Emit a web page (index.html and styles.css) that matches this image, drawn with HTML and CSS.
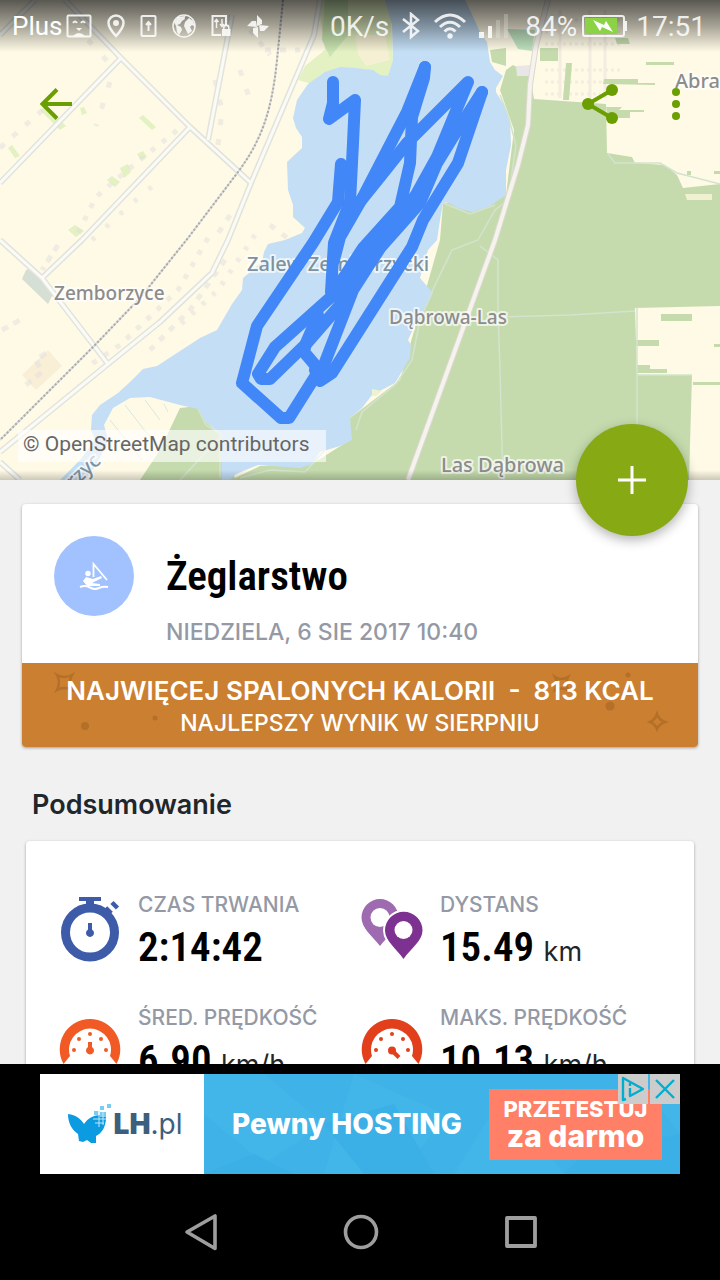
FILE: index.html
```html
<!DOCTYPE html>
<html lang="pl">
<head>
  <meta charset="UTF-8">
  <meta name="viewport" content="width=device-width, initial-scale=1">
  <title>Żeglarstwo</title>
  <link rel="stylesheet" href="styles.css">
</head>
<body>

<div class="app">
  <main class="content">
    <header class="hero">
      <svg class="map" viewBox="0 0 720 480" preserveAspectRatio="xMidYMid slice" role="img" aria-label="Zalew Zemborzycki">
        <rect width="720" height="480" fill="#fffae6"/>

        <!-- parks and meadows -->
        <path d="M318 0H390L393 60L388 78L380 77L370 70L340 68L312 84L298 80L305 66L325 50L322 30Z" fill="#e3f1c3"/>
        <path d="M325 0H348V35L330 57L322 40Z" fill="#c9e4b0"/>
        <path d="M355 35H385L390 60L366 66L358 55Z" fill="#f5f0d3"/>
        <path d="M40 110L46 106L66 126L60 130ZM139 118L143 115L156 127L152 130ZM8 148L12 145L20 156L15 158ZM80 108L84 107L87 113L82 115ZM107 180L112 176L120 182L115 187ZM120 168L128 164L131 172L124 178ZM68 230L75 225L84 231L76 237ZM137 154L143 151L147 157L141 160Z" fill="#e3f1c3"/>
        <path d="M26 270L31 268L54 292L48 304L22 279Z" fill="#d5dfd3"/>
        <path d="M22 375L48 350L62 366L36 390Z" fill="#f8efd6"/>

        <!-- built-up plots -->
        <g fill="none" stroke="#e3dfe0" stroke-width="5" opacity=".5">
          <path d="M0 148L22 128L45 108" stroke-dasharray="6 11"/>
          <path d="M78 233L96 197L118 178L146 155L180 128" stroke-dasharray="5 9"/>
          <path d="M92 240L130 205L160 180" stroke-dasharray="4 15"/>
          <path d="M88 40L108 62M110 82L96 126" stroke-dasharray="6 16"/>
          <path d="M215 80L222 110L218 145M240 70L250 100" stroke-dasharray="6 14"/>
          <path d="M208 238L178 290L120 345L90 365" stroke-dasharray="5 9"/>
          <path d="M225 260L190 310L150 350" stroke-dasharray="6 8"/>
          <path d="M255 235L218 290L180 325" stroke-dasharray="4 10"/>
          <path d="M58 245L42 270M26 385L42 372L36 360L50 350M2 330L20 320" stroke-dasharray="7 6"/>
          <path d="M265 50H300M250 30L270 55M230 215L214 240M270 225L290 240" stroke-dasharray="6 9"/>
        </g>
        <g fill="none" stroke="#f3ece0" stroke-width="3">
          <path d="M545 20H620M545 32H620M545 44H622M545 70H620M545 82H620M545 94H600" stroke-dasharray="3 3"/>
          <path d="M560 10V98M590 10V98M605 10V98"/>
        </g>

        <!-- forest -->
        <path d="M500 90L506 70L513 65L530 75L534 99L606 104L607 153L632 157L635 163L665 165L677 175L683 188L720 184V306L635 308L637 375H692L689 480H222L214 440L235 478L260 466L312 464L350 440L350 418L400 380L440 240L443 203L506 195L514 130Z" fill="#c5dbad"/>
        <path d="M180 408L198 406L206 422L220 434L224 480H140L160 450Z" fill="#c5dbad"/>
        <path d="M540 48H558V61H540ZM566 63H572L569 100H563ZM604 79H638V83H655V85L603 84ZM606 107H622L619 110H644V112H630V118H608ZM646 62H674V65H646ZM615 38H628L630 44H617ZM490 50L506 48V66L492 62ZM661 314H692V321H661ZM636 340H659V346H636ZM637 365H650V369H667V373H637ZM693 382H720V385H693ZM687 171H691V175H687ZM714 171H720V174H714ZM714 344H720V347H714Z" fill="#c5dbad"/>
        <path d="M507 29L535 30L532 51L518 49Z" fill="#bfe2bf"/>
        <path d="M516 66L531 65L532 76H517Z" fill="#e8e6e6"/>
        <path d="M685 194H712V200H687Z" fill="#f1f0d0"/>

        <!-- lake and river -->
        <path d="M340 67L325 72L308 84L297 100L293 118L296 128L302 137V148L287 162L288 190L293 205V217L305 228L302 233L285 240L268 244L264 252L262 262L243 278L242 290L232 304L217 330L200 338L157 366L143 369L130 382L118 393L100 405L92 415L91 430L95 440L80 460L60 480H85L98 462L108 440L104 425L113 408L130 398L150 397L180 405L198 409L206 422L221 434L222 480H230L236 474L258 465L300 468L312 464L320 452L340 446L352 440L350 418L362 408L372 395L395 383L410 358L411 345L408 340L415 325L425 310L433 293L420 278L428 250L437 240L440 220L443 203L447 202L458 208L472 212L490 206L506 195L506 170L511 145L510 120L505 107L496 92V88L503 76L495 70L490 62L487 42L480 32L470 10L465 0H385L392 25L393 60L388 76L380 75L373 70L355 68Z" fill="#c4def5"/>
        <path d="M372 389L382 391L376 396H372Z" fill="#eef2d0"/>
        <path d="M110 420L142 460M125 405L156 445M145 400L160 420M168 412L164 404" fill="none" stroke="#d9e8e3"/>

        <!-- paths in the forest -->
        <g fill="none" stroke="#d3e3ce" stroke-width="1.5">
          <path d="M500 95L508 115L516 145L508 200L495 210L478 240L452 250L435 285L420 320L412 360L396 384L362 412L356 430"/>
          <path d="M480 246L498 260V310L500 370L502 450L504 480M500 317L570 315L635 311M637 308V425M637 375H692"/>
          <path d="M608 154L615 163H660L677 173L720 184M443 203L470 214L495 205"/>
          <path d="M198 409L206 425L220 434V478M222 435L180 480M240 478L270 470L305 472L325 450"/>
        </g>

        <!-- roads -->
        <g fill="none" stroke="#e2e3da" stroke-width="6" stroke-linejoin="round">
          <path d="M65 0L121 58L190 127L251 183"/>
          <path d="M121 58L0 183M190 127L82 240L42 278M232 15L208 140M35 0L0 35"/>
          <path d="M320 0L314 35L251 183L228 240L212 273L160 322L108 364L0 452M0 240L42 278L108 364M0 462L20 480"/>
        </g>
        <g fill="none" stroke="#fafaf7" stroke-width="3" stroke-linejoin="round">
          <path d="M65 0L121 58L190 127L251 183"/>
          <path d="M121 58L0 183M190 127L82 240L42 278M232 15L208 140M35 0L0 35"/>
          <path d="M320 0L314 35L251 183L228 240L212 273L160 322L108 364L0 452M0 240L42 278L108 364M0 462L20 480"/>
        </g>
        <path d="M548 0L536 45L530 85L528 125L518 165L495 240L408 480" fill="none" stroke="#dcd9cf" stroke-width="6"/>
        <path d="M548 0L536 45L530 85L528 125L518 165L495 240L408 480" fill="none" stroke="#f6f2ed" stroke-width="4"/>

        <!-- railway -->
        <path d="M283 0L277 60C272 110 262 140 238 172L188 238L140 298L95 345L0 440" fill="none" stroke="#ddd" stroke-width="2"/>
        <path d="M283 0L277 60C272 110 262 140 238 172L188 238L140 298L95 345L0 440" fill="none" stroke="#aaa" stroke-width="2" stroke-dasharray="2 2"/>

        <g class="map-label">
          <text class="water" x="247" y="271">Zalew Zemborzycki</text>
          <text class="village" x="54" y="300">Zemborzyce</text>
          <text class="village" x="389" y="324">Dąbrowa-Las</text>
          <text x="441" y="472">Las Dąbrowa</text>
          <text x="675" y="88">Abramowice</text>
          <text class="water" transform="translate(68 494) rotate(-43)">trzyc</text>
        </g>

        <!-- recorded track -->
        <g fill="none" stroke="#4287f8" stroke-width="12" stroke-linejoin="round" stroke-linecap="round">
          <path d="M333 82V103L329 119L355 100L353 143L350 202L334 243L331 292"/>
          <path d="M341 164L338 202L313 243L257 326L242 383L281 418H289L318 372L315 365L304 352L306 343L318 315"/>
          <path d="M425 67L407 112L363 197L340 237L334 260"/>
          <path d="M425 67L424 78L412 117L410 163L400 207L363 248L331 297L275 347L258 374L261 379H270L307 343L347 297L380 248L417 193L437 157L468 82L407 143L380 177L355 208"/>
          <path d="M482 92L453 137L437 163L420 203L380 248L353 290L322 370"/>
          <path d="M482 92L458 163L423 220L412 247L332 373L320 381L315 370"/>
          <path d="M395 217L365 255L340 300M410 200L385 235L350 288"/>
        </g>
      </svg>

      <div class="status-bar">
        <span class="carrier">Plus</span>
        <div class="notifications">
          <svg width="26" height="24" viewBox="0 0 26 24"><rect x="1.5" y="1.5" width="23" height="21" rx="1" fill="none" stroke="currentColor" stroke-width="2"/><path d="M7 9Q9 6 11 9M15 9Q17 6 19 9" fill="none" stroke="currentColor" stroke-width="2"/><path d="M10 14H16L13 17ZM7 22Q13 16 19 22Z" fill="currentColor"/></svg>
          <svg width="18" height="24" viewBox="0 0 18 24"><path d="M9 1.5A7.5 7.5 0 0 0 1.5 9C1.5 14 9 22 9 22S16.5 14 16.5 9A7.5 7.5 0 0 0 9 1.5Z" fill="none" stroke="currentColor" stroke-width="2.5"/><circle cx="9" cy="9" r="3" fill="currentColor"/></svg>
          <svg width="17" height="24" viewBox="0 0 17 24"><rect x="1.5" y="2" width="14" height="20" rx="1" fill="none" stroke="currentColor" stroke-width="2"/><path d="M8.5 17V9M6 11L8.5 8L11 11" fill="none" stroke="currentColor" stroke-width="2"/></svg>
          <svg width="24" height="24" viewBox="0 0 24 24"><circle cx="12" cy="12" r="11" fill="none" stroke="currentColor" stroke-width="1.5"/><path d="M2 8L6 3L12 2L13 5L10 7L8 10L5 11L9 13L10 16L7 21L5 18L4 12ZM13 8L17 4L21 7L23 13L20 11L18 13L20 17L16 20L14 16L12 12ZM10 3L14 1L12 5Z" fill="currentColor"/></svg>
          <svg width="20" height="24" viewBox="0 0 20 24"><path d="M10 21H1.500V2H15V11" fill="none" stroke="currentColor" stroke-width="2"/><path d="M5.5 14V6M3.5 8L5.5 5.5L7.5 8M11 5V12M9 10L11 12.5L13 10" fill="none" stroke="currentColor" stroke-width="1.5"/><path d="M11 15H19.5V22H11ZM12 15V13.5A3 3 0 0 1 18.5 13.5V15H17V14A1.5 1.5 0 0 0 13.5 14V15Z" fill="currentColor"/></svg>
          <svg width="24" height="24" viewBox="0 0 24 24"><path d="M11 12V1L16 6V10ZM13 11L23 12L18 17H14ZM12 13V24L7 19V14ZM11 13L1 12L6 7H10Z" fill="currentColor"/></svg>
        </div>
        <span class="net-speed">0K/s</span>
        <div class="signals">
          <svg width="20" height="28" viewBox="0 0 20 28"><path d="M2 7L17 19L10 25V2L17 8L2 20" fill="none" stroke="currentColor" stroke-width="2.5"/></svg>
          <svg width="34" height="26" viewBox="0 0 34 26"><path d="M2 9Q17 -5 32 9M7 14Q17 4.5 27 14M11.5 18.5Q17 13 22.500 18.5" fill="none" stroke="currentColor" stroke-width="3"/><circle cx="17" cy="23" r="2.7" fill="currentColor"/></svg>
          <svg class="cell" width="30" height="26" viewBox="0 0 30 26"><path d="M0 19H5V25H0ZM9 13H13V25H9Z" fill="currentColor"/><path d="M17 7H21V25H17ZM25 1H29V25H25Z" fill="currentColor" opacity=".25"/></svg>
        </div>
        <span class="battery-level">84%</span>
        <svg class="battery" width="46" height="24" viewBox="0 0 46 24"><rect x="1" y="2" width="41" height="20" rx="2" fill="none" stroke="currentColor" stroke-width="2"/><rect x="3" y="4" width="32" height="16" fill="#8bd345"/><path d="M43 7H45V17H43Z" fill="currentColor"/><path d="M11 6L22 11L24 7L31 18L20 13L18 17Z" fill="#fff"/></svg>
        <span class="clock">17:51</span>
      </div>

      <nav class="toolbar">
        <button class="icon-button" aria-label="Wstecz">
          <svg width="48" height="48" viewBox="0 0 48 48"><path d="M40 24H10M25 9.500L10.500 24L25 38.500" fill="none" stroke="currentColor" stroke-width="4"/></svg>
        </button>
        <button class="icon-button share" aria-label="Udostępnij">
          <svg width="48" height="48" viewBox="0 0 48 48"><path d="M36 10L12 24L36 38" fill="none" stroke="currentColor" stroke-width="4"/><circle cx="36" cy="10" r="6" fill="currentColor"/><circle cx="12" cy="24" r="6" fill="currentColor"/><circle cx="36" cy="38" r="6" fill="currentColor"/></svg>
        </button>
        <button class="icon-button" aria-label="Więcej">
          <svg width="48" height="48" viewBox="0 0 48 48" fill="currentColor"><circle cx="24" cy="12" r="4"/><circle cx="24" cy="24" r="4"/><circle cx="24" cy="36" r="4"/></svg>
        </button>
      </nav>

      <p class="attribution">© OpenStreetMap contributors</p>
      <button class="fab" aria-label="Dodaj">
        <svg width="28" height="28" viewBox="0 0 28 28"><path d="M14 0V28M0 14H28" stroke="#fff" stroke-width="3"/></svg>
      </button>
    </header>

    <section class="card workout">
      <div class="workout-head">
        <span class="sport-icon">
          <svg width="32" height="30" viewBox="0 0 32 30"><path d="M15.500 16V3L29 19" fill="none" stroke="#fff" stroke-width="1.8"/><circle cx="10" cy="12.5" r="2.7" fill="#fff"/><path d="M8 16L15 18L23 15L24 17L16 21L14 22L22 23V25H9L5 20Z" fill="#fff"/><path d="M2 26Q7 24 12 26.500T21 27T30 26" fill="none" stroke="#fff" stroke-width="2"/></svg>
        </span>
        <div>
          <h1>Żeglarstwo</h1>
          <p class="date">NIEDZIELA, 6 SIE 2017 10:40</p>
        </div>
      </div>
      <div class="record">
        <svg class="confetti" viewBox="0 0 676 84" preserveAspectRatio="xMidYMid slice" aria-hidden="true">
          <g fill="none" stroke="#b46f29" stroke-width="2.5">
            <path d="M35 12Q42 16 50 12Q46 19 50 27Q42 23 35 27Q39 19 35 12Z"/>
            <path d="M533 14Q539 18 546 14Q543 20 546 27Q539 24 533 27Q536 20 533 14Z"/>
            <path d="M635 51Q637 57 643 59Q637 61 635 66Q633 61 628 59Q633 57 635 51Z"/>
          </g>
          <g fill="#b46f29"><circle cx="63" cy="63" r="4"/><circle cx="133" cy="55" r="2.5"/><circle cx="588" cy="43" r="4.5"/><circle cx="606" cy="12" r="2.5"/></g>
        </svg>
        <p class="record-title">NAJWIĘCEJ SPALONYCH KALORII&nbsp; -&nbsp; 813 KCAL</p>
        <p class="record-note">NAJLEPSZY WYNIK W SIERPNIU</p>
      </div>
    </section>

    <h2>Podsumowanie</h2>

    <section class="card summary">
      <div class="stat">
        <svg width="64" height="68" viewBox="0 0 64 68"><circle cx="32" cy="35.500" r="24.500" fill="none" stroke="#3d5ba9" stroke-width="9"/><path d="M21 0H43V4H36V10H28V4H21Z" fill="#3d5ba9"/><path d="M47 17L52 12" stroke="#3d5ba9" stroke-width="8"/><path d="M54 5.500L59.500 11" stroke="#3d5ba9" stroke-width="4.500"/><path d="M30 26H34V32.500A4 4 0 1 1 30 32.500Z" fill="#3d5ba9"/></svg>
        <div>
          <p class="label">CZAS TRWANIA</p>
          <p class="value">2:14:42</p>
        </div>
      </div>
      <div class="stat">
        <svg width="64" height="68" viewBox="0 0 64 68"><path d="M20 49C12 39 1.500 31 1.500 20.500A18.500 18.500 0 0 1 38.500 20.500C38.500 31 28 39 20 49Z" fill="#9e6bb0"/><circle cx="20" cy="20.500" r="9.500" fill="#fff"/><path d="M43.500 62C36 51 25 44 25 33.500A18.500 18.500 0 0 1 62.500 33.500C62.500 44 51 51 43.500 62Z" fill="#7d3292" stroke="#fff" stroke-width="4" paint-order="stroke"/><circle cx="43.500" cy="33" r="9" fill="#fff"/></svg>
        <div>
          <p class="label">DYSTANS</p>
          <p class="value">15.49 <span class="unit">km</span></p>
        </div>
      </div>
      <div class="stat">
        <svg width="64" height="68" viewBox="0 0 64 68"><g fill="#f15a24"><path d="M5.500 54A30.300 30.300 0 1 1 58.500 54L52 46A21 21 0 1 0 12 46Z"/><circle cx="16" cy="40" r="2"/><circle cx="21" cy="29" r="2"/><circle cx="32" cy="24" r="2"/><circle cx="43" cy="29" r="2"/><circle cx="48" cy="40" r="2"/><path d="M30 32H34V37A4 4 0 1 1 30 37Z"/></g></svg>
        <div>
          <p class="label">ŚRED. PRĘDKOŚĆ</p>
          <p class="value">6.90 <span class="unit">km/h</span></p>
        </div>
      </div>
      <div class="stat">
        <svg width="64" height="68" viewBox="0 0 64 68"><g fill="#e2401c"><path d="M5.500 54A30.300 30.300 0 1 1 58.500 54L52 46A21 21 0 1 0 12 46Z"/><circle cx="16" cy="40" r="2"/><circle cx="21" cy="29" r="2"/><circle cx="32" cy="24" r="2"/><circle cx="43" cy="29" r="2"/><circle cx="48" cy="40" r="2"/><circle cx="32" cy="40.500" r="4"/></g><path d="M32 40.500L39 47.500" stroke="#e2401c" stroke-width="4"/></svg>
        <div>
          <p class="label">MAKS. PRĘDKOŚĆ</p>
          <p class="value">10.13 <span class="unit">km/h</span></p>
        </div>
      </div>
    </section>
  </main>

  <aside class="ad-slot">
    <div class="ad">
      <a class="ad-link" href="#">
        <span class="ad-logo">
          <svg width="44" height="42" viewBox="0 0 44 42"><path d="M0 11C8 12 13 16 16 21C20 15 26 12 33 12L38 14C38 24 34 30 28 33L28 40L23 40L19 37L15 39L11 38L10 31C4 27 0 20 0 11Z" fill="#0a9be0"/><path d="M26 8H30V12H26ZM32 3H36V7H32ZM39 1H43V5H39ZM32 9H38V14H32Z" fill="#7bcdf0"/><path d="M31 8V24M35 9V22M25 16H38M27 20H36" stroke="#bfe7fa" stroke-width="1"/></svg>
          <span class="ad-brand"><b>LH</b>.pl</span>
        </span>
        <span class="ad-body">
          <svg class="ad-facets" viewBox="0 0 476 100" preserveAspectRatio="none" aria-hidden="true"><path d="M0 0H60L120 50L60 90L0 40ZM150 0L240 40L200 100H120ZM300 20L360 100H250ZM430 0L476 60V0Z" fill="#46b7ea"/><path d="M0 100L50 80L90 100ZM120 50L190 30L230 100H160ZM380 80L476 60V100H360Z" fill="#39aee5"/></svg>
          <span class="ad-text">Pewny HOSTING</span>
          <span class="ad-cta"><span>PRZETESTUJ</span><span class="ad-cta-big">za darmo</span></span>
        </span>
      </a>
      <div class="ad-controls">
        <button aria-label="Informacje o reklamie">
          <svg width="30" height="30" viewBox="0 0 30 30"><path d="M8 25L5 26V4L25 15L12 22V14" fill="none" stroke="#00aecd" stroke-width="2.4" stroke-linejoin="round"/><path d="M12 9V12" stroke="#00aecd" stroke-width="2.4"/></svg>
        </button>
        <button aria-label="Zamknij reklamę">
          <svg width="30" height="30" viewBox="0 0 30 30"><path d="M6 6L24 24M24 6L6 24" stroke="#00aecd" stroke-width="2.4"/></svg>
        </button>
      </div>
    </div>
  </aside>

  <nav class="system-nav">
    <button aria-label="Wstecz"><svg width="40" height="40" viewBox="0 0 40 40"><path d="M35 4V36.500L7 20Z" fill="none" stroke="#9e9e9e" stroke-width="3.6" stroke-linejoin="round"/></svg></button>
    <button aria-label="Ekran główny"><svg width="40" height="40" viewBox="0 0 40 40"><circle cx="21" cy="20" r="15.500" fill="none" stroke="#9e9e9e" stroke-width="3.6"/></svg></button>
    <button aria-label="Ostatnie"><svg width="40" height="40" viewBox="0 0 40 40"><rect x="7" y="6" width="28" height="28" fill="none" stroke="#9e9e9e" stroke-width="3.8" stroke-linejoin="round"/></svg></button>
  </nav>
</div>

</body>
</html>
```
FILE: styles.css
```css
* {
  box-sizing: border-box;
}
body {
  margin: 0;
  font-family: Inter, Roboto, sans-serif;
  background: #f1f1f1;
  color: #21262a;
}
h1, h2, p {
  margin: 0;
}
button {
  padding: 0;
  border: none;
  background: transparent;
  cursor: pointer;
}
svg {
  display: block;
  flex-shrink: 0;
}
.app {
  display: flex;
  flex-direction: column;
  height: 100vh;
}
.content {
  flex: 1;
  min-height: 0;
  overflow: hidden;
}

/* map */
.hero {
  position: relative;
  aspect-ratio: 3 / 2;
  margin-bottom: 24px;
}
.hero::after {
  content: "";
  position: absolute;
  inset: auto 0 0 0;
  height: 10px;
  background: linear-gradient(transparent, rgba(0,0,0,0.2));
}
.map {
  width: 100%;
  height: 100%;
}
.map-label {
  font-family: "Noto Sans", "Open Sans", sans-serif;
  font-size: 20px;
  fill: #8c8c8c;
  stroke: rgba(255,255,255,0.7);
  stroke-width: 4px;
  stroke-linejoin: round;
  paint-order: stroke;
  font-weight: 500;
}
.map-label .water {
  fill: #7c929f;
}
.map-label .village {
  font-size: 19px;
}
.status-bar {
  position: absolute;
  inset: 0 0 auto 0;
  display: flex;
  align-items: center;
  height: 52px;
  padding: 0 14px 0 12px;
  font-family: Roboto, sans-serif;
  font-size: 28px;
  color: rgba(255,255,255,0.85);
  background: linear-gradient(rgba(0,0,0,0.65), rgba(0,0,0,0.35) 50%, transparent);
}
.carrier {
  font-size: 26px;
  color: #fff;
}
.notifications {
  display: flex;
  gap: 15px;
  margin-left: 4px;
}
.net-speed {
  margin-left: auto;
}
.signals {
  display: flex;
  align-items: center;
  gap: 12px;
  margin: 0 16px 0 12px;
}
.battery {
  margin: 0 8px 0 5px;
}
.toolbar {
  position: absolute;
  inset: 56px 20px auto 32px;
  display: flex;
  align-items: center;
  height: 96px;
}
.icon-button {
  color: #6b9e00;
}
.share {
  margin: 0 28px 0 auto;
}
.attribution {
  position: absolute;
  left: 18px;
  bottom: 18px;
  padding: 0 17px 4px 5px;
  font: 21px/28px Roboto, sans-serif;
  color: #666;
  background: rgba(255,255,255,0.62);
}
.fab {
  position: absolute;
  right: 32px;
  bottom: -56px;
  z-index: 1;
  display: grid;
  place-items: center;
  width: 112px;
  height: 112px;
  border-radius: 50%;
  background: #87a914;
  box-shadow: 0 4px 12px rgba(0,0,0,0.3);
}

/* cards */
.card {
  background: #fff;
  border-radius: 4px;
  box-shadow: 0 1px 3px rgba(0,0,0,0.35);
}
.workout {
  margin: 0 22px;
  overflow: hidden;
}
.workout-head {
  display: flex;
  gap: 32px;
  padding: 32px 32px 14px;
}
.sport-icon {
  display: grid;
  place-items: center;
  width: 80px;
  height: 80px;
  border-radius: 50%;
  background: #a1c2ff;
}
h1, .value {
  font-family: "Roboto Condensed", "Liberation Sans Narrow", sans-serif;
  font-size: 41px;
  font-weight: 600;
  color: #000;
}
h1 {
  line-height: 80px;
}
.date {
  font-size: 23px;
  line-height: 33px;
  font-weight: 500;
  color: #9499a5;
}
.record {
  position: relative;
  padding: 12px 0 8px;
  text-align: center;
  line-height: 32px;
  color: #fff;
  background: #cb7f31;
}
.confetti {
  position: absolute;
  inset: 0;
  width: 100%;
  height: 100%;
}
.record p {
  position: relative;
}
.record-title {
  font-size: 26px;
  font-weight: 600;
}
.record-note {
  font-size: 23px;
  font-weight: 500;
}
h2 {
  margin: 37px 32px 15px;
  font-size: 27px;
  line-height: 42px;
  font-weight: 600;
}
.summary {
  display: grid;
  grid-template-columns: 1fr 1fr;
  margin: 0 26px;
  padding: 48px 32px;
}
.stat {
  display: flex;
  align-items: center;
  gap: 16px;
  height: 113px;
  padding-bottom: 29px;
}
.label {
  font-size: 21px;
  line-height: 32px;
  font-weight: 500;
  white-space: nowrap;
  color: #9499a5;
}
.value {
  line-height: 52px;
  white-space: nowrap;
}
.unit {
  font-family: Inter, sans-serif;
  font-size: 27px;
  line-height: 1;
  font-weight: normal;
  color: #21262a;
}

/* ad */
.ad-slot {
  padding: 10px 40px;
  background: #000;
}
.ad {
  position: relative;
  height: 100px;
}
.ad-link {
  display: flex;
  height: 100%;
  color: #fff;
  text-decoration: none;
}
.ad-logo {
  display: flex;
  align-items: center;
  justify-content: center;
  gap: 2px;
  width: 164px;
  padding-left: 6px;
  background: #fff;
}
.ad-brand {
  font-size: 28px;
  color: #3b5f7d;
}
.ad-brand b {
  font-weight: 900;
}
.ad-body {
  position: relative;
  flex: 1;
  display: flex;
  align-items: center;
  justify-content: space-between;
  padding: 0 18px 0 28px;
  background: #3fb3e8;
}
.ad-facets {
  position: absolute;
  inset: 0;
  width: 100%;
  height: 100%;
  opacity: 0.5;
}
.ad-text, .ad-cta {
  position: relative;
  font-weight: 800;
}
.ad-text {
  font-size: 28px;
}
.ad-cta {
  display: flex;
  flex-direction: column;
  align-items: center;
  width: 173px;
  padding: 7px 0 10px;
  font-size: 22px;
  line-height: 26px;
  background: #ff8066;
}
.ad-cta-big {
  font-size: 30px;
  line-height: 28px;
}
.ad-controls {
  position: absolute;
  top: 0;
  right: 0;
  display: flex;
  gap: 2px;
}
.ad-controls button {
  background: #ccc;
}

.system-nav {
  display: flex;
  justify-content: center;
  height: 96px;
  background: #000;
}
.system-nav button {
  display: grid;
  place-items: center;
  width: 160px;
}
```
